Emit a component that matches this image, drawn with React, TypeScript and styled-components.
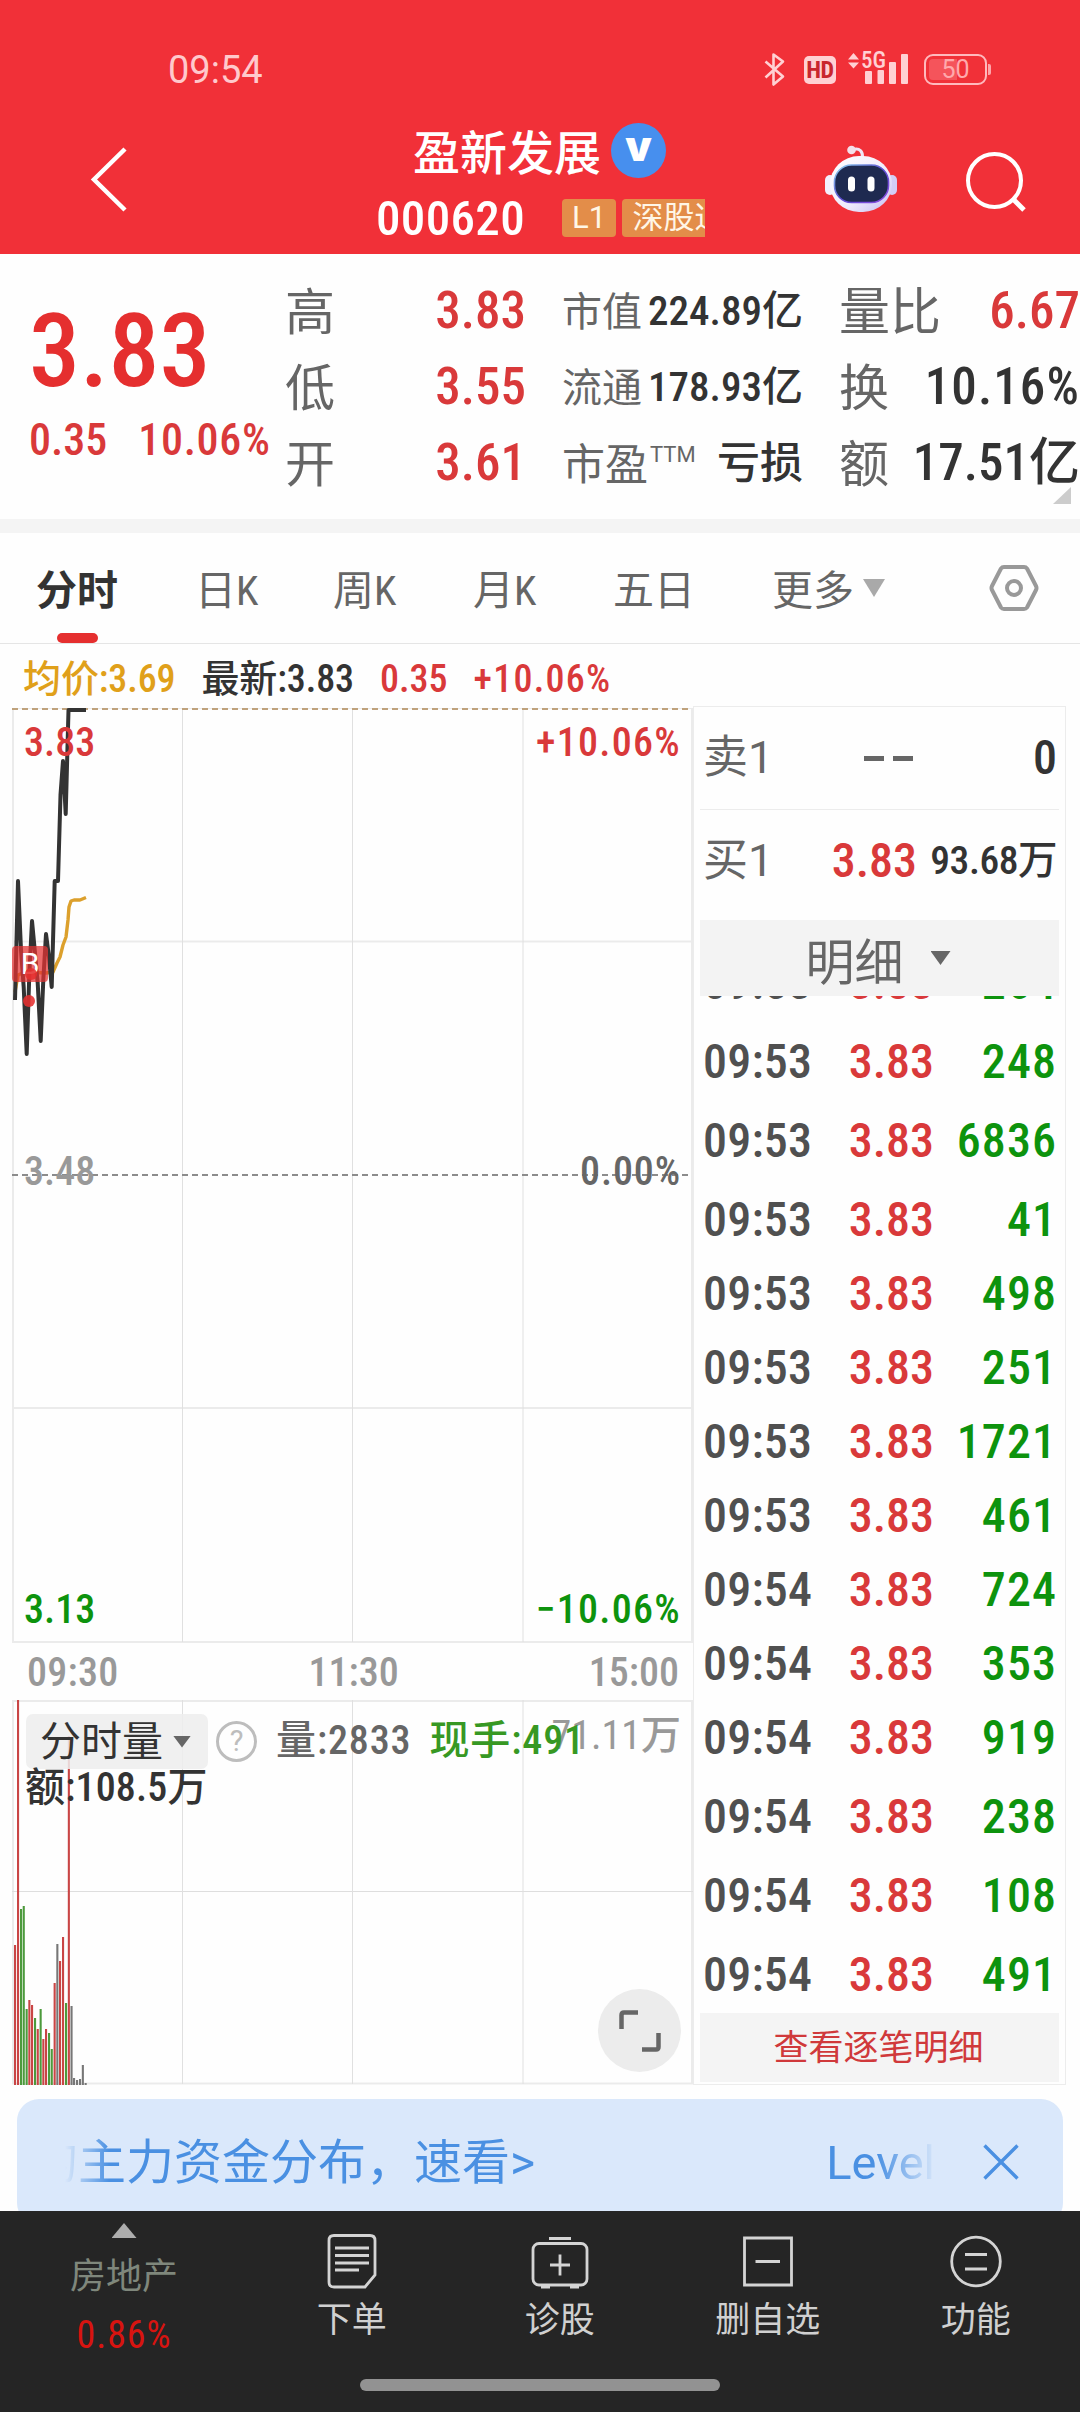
import React from "react";
import styled, { createGlobalStyle } from "styled-components";

const RED = "#d9393a";
const GREEN = "#0d930d";
const INK = "#333333";
const GRAY = "#666666";
const MUTED = "#999999";
const LABEL_FONT = `Roboto, "Noto Sans CJK SC", sans-serif`;
const NUM_FONT = `"Roboto Condensed", Roboto, "Noto Sans CJK SC", sans-serif`;

const GlobalStyle = createGlobalStyle`
  * { box-sizing: border-box; }
  body { margin: 0; background: #fff; font-family: ${LABEL_FONT}; }
  svg { display: block; flex: none; }
`;

const Screen = styled.div`
  width: 1080px;
  height: 2412px;
  display: flex;
  flex-direction: column;
  overflow: hidden;
  background: #fefefe;
`;

const Label = styled.span<{ $size: number; $color?: string; $weight?: number }>`
  font-size: ${p => p.$size}px;
  font-weight: ${p => p.$weight ?? 400};
  color: ${p => p.$color ?? GRAY};
  white-space: nowrap;
`;

const Num = styled.span<{ $size: number; $color?: string; $weight?: number; $track?: number }>`
  font-family: ${NUM_FONT};
  font-size: ${p => p.$size}px;
  font-weight: ${p => p.$weight ?? 500};
  letter-spacing: ${p => p.$track ?? 0}em;
  color: ${p => p.$color ?? INK};
  white-space: nowrap;
`;

const Caret = styled.i<{ $w: number; $h: number; $color: string; $up?: boolean }>`
  width: ${p => p.$w}px;
  height: ${p => p.$h}px;
  background: ${p => p.$color};
  clip-path: ${p => (p.$up ? "polygon(50% 0, 100% 100%, 0 100%)" : "polygon(0 0, 100% 0, 50% 100%)")};
`;

/* ---------- header ---------- */

const Header = styled.header`
  height: 254px;
  flex: none;
  background: #f13038;
  display: flex;
  flex-direction: column;
`;

const StatusBar = styled.div`
  height: 112px;
  padding: 52px 93px 0 168px;
  display: flex;
  justify-content: space-between;
  align-items: flex-start;
`;

const Clock = styled(Label)`
  line-height: 37px;
`;

const StatusIcons = styled.div`
  display: flex;
  align-items: flex-start;
  color: #ffd0d3;
`;

const HdChip = styled.div`
  width: 32px;
  height: 28px;
  margin: 4px 0 0 19px;
  border-radius: 5px;
  background: #ffd0d3;
  color: #c9262e;
  font: 700 24px/29px ${NUM_FONT};
  letter-spacing: -0.4px;
  text-align: center;
`;

const Signal = styled.div`
  position: relative;
  width: 64px;
  margin-left: 12px;
`;

const SignalText = styled.span`
  position: absolute;
  left: 13px;
  top: -3px;
  font: 500 23px/24px ${NUM_FONT};
`;

const Battery = styled.div`
  width: 63px;
  height: 31px;
  margin: 2px 0 0 12px;
  padding: 3px;
  border: 2px solid #ffb9bd;
  border-radius: 9px;
  display: flex;
  position: relative;
  &::after {
    content: "";
    position: absolute;
    right: -6px;
    top: 8px;
    width: 3px;
    height: 11px;
    border-radius: 0 2px 2px 0;
    background: #ffa5aa;
  }
`;

const Charge = styled.div`
  width: 28px;
  border-radius: 4px 0 0 4px;
  background: #f5545b;
`;

const ChargeText = styled.span`
  position: absolute;
  inset: 0;
  text-align: center;
  font: 400 25px/28px ${LABEL_FONT};
  color: #ffa9ad;
`;

const NavBar = styled.div`
  flex: 1;
  display: flex;
  align-items: flex-start;
`;

const BackSlot = styled.div`
  width: 376px;
  padding: 34px 0 0 88px;
`;

const TitleBlock = styled.div`
  width: 329px;
  margin-right: 120px;
  overflow: hidden;
`;

const TitleRow = styled.div`
  height: 74px;
  padding: 11px 0 0 37px;
  display: flex;
  line-height: 62px;
`;

const Verified = styled.span`
  width: 55px;
  height: 55px;
  margin-left: 10px;
  border-radius: 50%;
  background: #478fee;
  color: #fff;
  text-align: center;
  font: 900 42px/46px Inter, sans-serif;
`;

const CodeRow = styled.div`
  height: 64px;
  display: flex;
  align-items: center;
`;

const CodeNum = styled(Num)`
  width: 186px;
  flex: none;
`;

const Tag = styled.span<{ $w: number }>`
  width: ${p => p.$w}px;
  height: 38px;
  flex: none;
  margin-right: 6px;
  border-radius: 4px;
  background: #e38d49;
  color: #fff6e6;
  text-align: center;
  font: 400 31px/38px ${LABEL_FONT};
  white-space: nowrap;
`;

const IconSlot = styled.div<{ $top: number; $left?: number }>`
  padding: ${p => p.$top}px 0 0 ${p => p.$left ?? 0}px;
`;

/* ---------- quote ---------- */

const Quote = styled.section`
  height: 279px;
  flex: none;
  display: flex;
  border-bottom: 14px solid #f4f4f4;
  background: #fefefe;
  position: relative;
`;

const PriceBlock = styled.div`
  width: 285px;
  padding: 46px 0 0 29px;
  display: flex;
  flex-direction: column;
`;

const BigPrice = styled(Num)`
  line-height: 102px;
`;

const Change = styled.div`
  margin-top: 13px;
  display: flex;
  gap: 31px;
  line-height: 50px;
`;

const Stats = styled.div`
  padding-top: 19px;
  display: grid;
  grid-template-columns: repeat(3, 241px);
  grid-auto-rows: 76px;
  column-gap: 36px;
`;

const Stat = styled.div`
  display: flex;
  justify-content: space-between;
  align-items: flex-start;
  line-height: 76px;
`;

const StatLabel = styled(Label)`
  padding-top: 1.5px;
`;

const Sup = styled.sup`
  font-size: 22px;
  line-height: 1;
  position: relative;
  top: -2px;
  margin-left: 2px;
`;

const Corner = styled.i`
  position: absolute;
  right: 9px;
  top: 233px;
  width: 18px;
  height: 17px;
  background: #cccccc;
  clip-path: polygon(100% 0, 100% 100%, 0 100%);
`;

/* ---------- tabs ---------- */

const Tabs = styled.nav`
  height: 111px;
  flex: none;
  border-bottom: 1px solid #e5e5e5;
  display: flex;
  align-items: flex-start;
  padding-left: 36px;
`;

const Tab = styled.div<{ $w: number; $active?: boolean }>`
  width: ${p => p.$w}px;
  height: 110px;
  display: flex;
  align-items: flex-start;
  gap: 9px;
  padding-top: 28px;
  font-family: ${NUM_FONT};
  font-size: 41px;
  line-height: 60px;
  color: ${p => (p.$active ? INK : GRAY)};
  font-weight: ${p => (p.$active ? 700 : 400)};
  position: relative;
  white-space: nowrap;
  ${p => p.$active && `
    &::after {
      content: "";
      position: absolute;
      left: 21px;
      bottom: 0;
      width: 41px;
      height: 10px;
      border-radius: 5px;
      background: #e52f2f;
    }
  `}
  i { margin-top: 18px; }
`;

const InfoRow = styled.div`
  height: 62px;
  flex: none;
  padding: 5px 0 0 23px;
  display: flex;
  gap: 26px;
  line-height: 61px;
`;

/* ---------- market body ---------- */

const Market = styled.main`
  height: 1379px;
  flex: none;
  display: flex;
  padding-left: 12px;
`;

const Charts = styled.div`
  width: 681px;
  display: flex;
  flex-direction: column;
  padding-top: 2px;
`;

const ChartBox = styled.div<{ $h: number }>`
  height: ${p => p.$h}px;
  position: relative;
`;

const ChartText = styled(Num)<{ $y: number; $side: "left" | "right" }>`
  position: absolute;
  top: ${p => p.$y - 24}px;
  ${p => p.$side}: 12px;
  line-height: 50px;
`;

const Flag = styled.span`
  position: absolute;
  left: 0;
  top: 238px;
  width: 36px;
  height: 36px;
  border-radius: 4px;
  background: rgba(229, 50, 50, 0.72);
  color: #fff;
  text-align: center;
  font: 400 30px/35px ${LABEL_FONT};
`;

const Dot = styled.i<{ $x: number; $y: number }>`
  position: absolute;
  left: ${p => p.$x - 6}px;
  top: ${p => p.$y - 6}px;
  width: 12px;
  height: 12px;
  border-radius: 50%;
  background: rgba(229, 47, 47, 0.88);
`;

const TimeAxis = styled.div`
  height: 57px;
  padding: 0 14px 0 15px;
  display: flex;
  justify-content: space-between;
  line-height: 59px;
`;

const VolumeHead = styled.div`
  position: absolute;
  left: 14px;
  top: 14px;
  height: 55px;
  display: flex;
  align-items: center;
  line-height: 50px;
`;

const Pill = styled.div`
  width: 182px;
  height: 55px;
  padding-left: 14px;
  border-radius: 7px;
  background: rgba(238, 238, 238, 0.86);
  display: flex;
  align-items: center;
  gap: 10px;
  line-height: 54px;
`;

const Help = styled.span`
  width: 41px;
  height: 41px;
  margin: 0 19px 0 8px;
  border: 3px solid #bdbdbd;
  border-radius: 50%;
  color: #bdbdbd;
  text-align: center;
  font: 400 29px/35px ${LABEL_FONT};
`;

const Readout = styled.div`
  display: flex;
  gap: 18px;
  height: 55px;
  line-height: 54px;
`;

const Amount = styled(Num)`
  position: absolute;
  left: 13px;
  top: 63px;
  line-height: 50px;
`;

const Expand = styled.div`
  position: absolute;
  left: 586px;
  top: 289px;
  width: 83px;
  height: 83px;
  border-radius: 50%;
  background: #ececec;
  display: flex;
  align-items: center;
  justify-content: center;
`;

const Book = styled.aside`
  width: 373px;
  height: 1379px;
  padding: 0 6px 0 6px;
  border: 1px solid #ececec;
  display: flex;
  flex-direction: column;
`;

const Order = styled.div<{ $h: number; $line?: boolean }>`
  height: ${p => p.$h}px;
  flex: none;
  padding: 0 2px 0 3px;
  display: grid;
  grid-template-columns: 110px 104px 1fr;
  align-items: center;
  line-height: 60px;
  border-bottom: ${p => (p.$line ? "1px solid #ececec" : "0")};
  & > :nth-child(n + 2) { text-align: right; }
`;

const Dashes = styled.span`
  display: flex;
  justify-content: flex-end;
  gap: 9px;
  padding-right: 4px;
  i { width: 20px; height: 5px; background: ${GRAY}; }
`;

const DetailHead = styled.div`
  height: 76px;
  flex: none;
  margin-top: 8px;
  padding-right: 3px;
  background: #f3f3f3;
  display: flex;
  align-items: center;
  justify-content: center;
  gap: 27px;
`;

const Ticks = styled.div`
  flex: 1;
  min-height: 0;
  overflow: hidden;
  & > :first-child { margin-top: -39px; }
`;

const Tick = styled.div<{ $h: number }>`
  height: ${p => p.$h}px;
  padding: 0 2px 0 3px;
  display: grid;
  grid-template-columns: 128px 103px 1fr;
  line-height: 52px;
  & > :nth-child(n + 2) { text-align: right; }
`;

const MoreButton = styled.button`
  height: 69px;
  flex: none;
  margin-bottom: 2px;
  padding: 3px 2px 0 0;
  border: 0;
  background: #f4f4f4;
  color: #d0393b;
  font: 400 35px/66px ${LABEL_FONT};
`;

/* ---------- banner ---------- */

const Banner = styled.div`
  height: 126px;
  flex: none;
  margin: 14px 17px -14px;
  padding: 0 44px 0 48px;
  border-radius: 22px;
  background: #dae8fb;
  color: #4a90e2;
  display: flex;
  align-items: center;
  justify-content: space-between;
`;

const Marquee = styled.div`
  width: 870px;
  padding-top: 2px;
  overflow: hidden;
  display: flex;
  justify-content: space-between;
  font-size: 48px;
  line-height: 124px;
  white-space: nowrap;
  mask-image: linear-gradient(90deg, transparent 0, #000 44px, #000 812px, transparent 872px);
`;

const Lead = styled.span`
  margin-left: -35px;
`;

const Tail = styled.span`
  font-size: 47px;
`;

/* ---------- bottom bar ---------- */

const BottomBar = styled.footer`
  height: 201px;
  flex: none;
  position: relative;
  background: #252525;
  display: flex;
  flex-direction: column;
`;

const BottomItems = styled.div`
  height: 168px;
  padding-left: 20px;
  display: grid;
  grid-template-columns: 228px 208px 208px 208px 208px;
`;

const Sector = styled.div`
  padding: 12px 20px 0 0;
  display: flex;
  flex-direction: column;
  align-items: center;
`;

const SectorName = styled(Label)`
  margin-top: 9px;
  line-height: 60px;
`;

const SectorChange = styled(Num)`
  line-height: 57px;
`;

const Action = styled.div`
  margin-left: -0.5px;
  padding-top: 21px;
  display: flex;
  flex-direction: column;
  align-items: center;
  line-height: 62px;
`;

const HomeBar = styled.i`
  width: 360px;
  height: 12px;
  margin-left: 360px;
  border-radius: 6px;
  background: #929292;
`;

/* ---------- data ---------- */

const stats: { label: string; sup?: string; value: string; ls: number; vs: number; color?: string; track?: number }[] = [
  { label: "高", value: "3.83", ls: 50, vs: 51, color: RED },
  { label: "市值", value: "224.89亿", ls: 40, vs: 41 },
  { label: "量比", value: "6.67", ls: 51, vs: 51, color: RED },
  { label: "低", value: "3.55", ls: 50, vs: 51, color: RED },
  { label: "流通", value: "178.93亿", ls: 40, vs: 41 },
  { label: "换", value: "10.16%", ls: 50, vs: 51, track: 0.022 },
  { label: "开", value: "3.61", ls: 50, vs: 51, color: RED },
  { label: "市盈", sup: "TTM", value: "亏损", ls: 43, vs: 43 },
  { label: "额", value: "17.51亿", ls: 50, vs: 51 },
];

const ticks: [string, string, number][] = [
  ["09:53", "264", 79], ["09:53", "248", 79], ["09:53", "6836", 79], ["09:53", "41", 74],
  ["09:53", "498", 74], ["09:53", "251", 74], ["09:53", "1721", 74], ["09:53", "461", 74],
  ["09:54", "724", 74], ["09:54", "353", 74], ["09:54", "919", 79], ["09:54", "238", 79],
  ["09:54", "108", 79], ["09:54", "491", 79],
];

type Bar = [number, number, "r" | "g" | "k"];
const bars: Bar[] = [
  [15, 1944, "r"], [18, 1699, "r"], [21, 1908, "g"], [23.7, 1905, "g"], [26.6, 2008, "g"],
  [29.3, 1999, "r"], [32, 2004, "r"], [35, 2017, "g"], [37.7, 2028, "r"], [40.6, 2008, "g"],
  [43.3, 2038, "r"], [46, 2028, "r"], [49, 2032, "g"], [51.7, 2048, "g"], [54.6, 1982, "r"],
  [57.3, 1943, "k"], [60, 1960, "r"], [63, 1936, "r"], [66, 2002, "g"], [68.8, 1735, "r"],
  [71.5, 2005, "k"], [74, 2077, "k"], [77, 2079, "k"], [80, 2078, "k"], [82.8, 2064, "k"], [85.6, 2082, "k"],
];
const barColor = { r: "#c94545", g: "#4c9a3c", k: "#777777" };

const pricePath =
  "M15 1000L18 881L21 950L23.7 987L26.7 1054L29.3 975L32 921L35 953L37.7 983L40.7 1041L43.3 980L46 934L49 957L51.7 987L54.7 881H58L60.5 795L63 761L65.7 814L68.5 710H86";
const avgPath = "M15 992L18 975L25 972L46 973L53 972L57 963L60 957L63 945L66 937L68 920L69 907L71 901L74 900H80L86 897.5";

const gridX = [170.5, 340.5, 511];

/* ---------- drawings ---------- */

const Bluetooth = () => (
  <svg width="21" height="35" viewBox="0 0 21 35" fill="none" stroke="currentColor" strokeWidth="2.6" strokeLinejoin="round">
    <path d="M1.5 9.5L19 24.5L9.5 32.5V2.5L19 9.5L1.5 25.5" />
  </svg>
);

const SignalBars = () => (
  <svg width="62" height="34" viewBox="0 0 62 34" fill="currentColor">
    <path d="M0 7.5L5.5 1L11 7.5zM0 10.5L5.5 16.5L11 10.5z" />
    <rect x="17" y="19" width="7" height="13" rx="1" />
    <rect x="29.5" y="18" width="6.5" height="14" rx="1" />
    <rect x="41" y="10" width="7" height="22" rx="1" />
    <rect x="53" y="2" width="7" height="30" rx="1" />
  </svg>
);

const Robot = () => (
  <svg width="72" height="68" viewBox="0 0 72 68">
    <defs>
      <linearGradient id="shell" x1="0" y1="0" x2="1" y2="1">
        <stop offset="0" stopColor="#ffffff" />
        <stop offset="0.6" stopColor="#efeafb" />
        <stop offset="1" stopColor="#c4bcf2" />
      </linearGradient>
      <linearGradient id="rim" x1="0" y1="0" x2="1" y2="1">
        <stop offset="0" stopColor="#8fd8f0" />
        <stop offset="0.5" stopColor="#5a4bd0" />
        <stop offset="1" stopColor="#8c4be0" />
      </linearGradient>
    </defs>
    <path d="M27 5C35 2 38 7 37.5 13" fill="none" stroke="#f0e6f6" strokeWidth="3" />
    <circle cx="26.5" cy="5" r="4.3" fill="#f4dfe9" />
    <rect x="0" y="30" width="10" height="20" rx="5" fill="#f3effc" />
    <rect x="62" y="30" width="10" height="20" rx="5" fill="#d3cdf6" />
    <rect x="5" y="11" width="62" height="56" rx="29" fill="url(#shell)" />
    <rect x="9.5" y="20" width="54" height="37.5" rx="17" fill="#1e2a50" stroke="url(#rim)" strokeWidth="1.6" />
    <rect x="23" y="31.5" width="7" height="15" rx="3.5" fill="#fff" />
    <rect x="42.5" y="31.5" width="7" height="15" rx="3.5" fill="#fff" />
  </svg>
);

const PriceChart = () => (
  <svg width="681" height="936" viewBox="0 0 681 936" fill="none">
    <path d="M0 0H681M0 233.5H681M0 700H681M0 934H681M1 0V934M680 0V934" stroke="#ebebeb" strokeWidth="2" />
    {gridX.map(x => <path key={x} d={`M${x} 0V934`} stroke="#e0e0e0" />)}
    <path d="M0 1H680" stroke="#bfa27c" strokeWidth="2" strokeDasharray="6 4" />
    <path d="M0 467H680" stroke="#8c8c8c" strokeWidth="2" strokeDasharray="6 4" />
    <g transform="translate(-12 -708)" strokeLinejoin="round">
      <path d={avgPath} stroke="#dca02c" strokeWidth="3.4" />
      <path d={pricePath} stroke="#333" strokeWidth="4" />
    </g>
  </svg>
);

const VolumeChart = () => (
  <svg width="681" height="385" viewBox="0 0 681 385" fill="none">
    <path d="M0 1H681M0 383.5H681M1 0V384M680 0V384" stroke="#ebebeb" strokeWidth="2" />
    <path d="M0 191.5H681" stroke="#dedede" />
    {gridX.map(x => <path key={x} d={`M${x} 0V384`} stroke="#e0e0e0" />)}
    {bars.map(([x, y, c]) => (
      <rect key={x} x={x - 13} y={y - 1699} width="2.1" height={2084 - y} fill={barColor[c]} />
    ))}
  </svg>
);

const actions = [
  {
    name: "下单",
    icon: (
      <svg width="58" height="58" viewBox="0 0 58 58" fill="none" stroke="#d4d4d4" strokeWidth="2.8">
        <path d="M11 3.5H47Q52 3.5 52 8.5V43L42 55H11Q6 55 6 50V8.5Q6 3.5 11 3.5z" />
        <path d="M12 16H46M12 23.5H46M12 31H46M12 38H36" />
      </svg>
    ),
  },
  {
    name: "诊股",
    icon: (
      <svg width="58" height="58" viewBox="0 0 58 58" fill="none" stroke="#d4d4d4" strokeWidth="2.8">
        <rect x="2" y="11.5" width="54" height="41.5" rx="6" />
        <path d="M18 6.5H40M29 22.5V43.5M19 33H39M10 55H19M39 55H48" />
      </svg>
    ),
  },
  {
    name: "删自选",
    icon: (
      <svg width="58" height="58" viewBox="0 0 58 58" fill="none" stroke="#d4d4d4" strokeWidth="2.8">
        <path d="M5.5 6H52.5V53H5.5zM16.5 29.5H41" />
      </svg>
    ),
  },
  {
    name: "功能",
    icon: (
      <svg width="58" height="58" viewBox="0 0 58 58" fill="none" stroke="#d4d4d4" strokeWidth="2.8">
        <circle cx="29" cy="29.5" r="24.3" />
        <path d="M18 22.5H40M18 37H40" />
      </svg>
    ),
  },
];

export default function App() {
  return (
    <Screen>
      <GlobalStyle />
      <Header>
        <StatusBar>
          <Clock $size={38} $color="#ffc9cc">09:54</Clock>
          <StatusIcons>
            <Bluetooth />
            <HdChip>HD</HdChip>
            <Signal>
              <SignalBars />
              <SignalText>5G</SignalText>
            </Signal>
            <Battery>
              <Charge />
              <ChargeText>50</ChargeText>
            </Battery>
          </StatusIcons>
        </StatusBar>
        <NavBar>
          <BackSlot>
            <svg width="40" height="68" viewBox="0 0 40 68" fill="none" stroke="#fff" strokeWidth="4.5">
              <path d="M37 3L6 33.5L37 64" />
            </svg>
          </BackSlot>
          <TitleBlock>
            <TitleRow>
              <Label $size={47} $color="#fff" $weight={500}>盈新发展</Label>
              <Verified>v</Verified>
            </TitleRow>
            <CodeRow>
              <CodeNum $size={49} $color="#fff" $track={0.007}>000620</CodeNum>
              <Tag $w={54}>L1</Tag>
              <Tag $w={114}>深股通</Tag>
            </CodeRow>
          </TitleBlock>
          <IconSlot $top={33}><Robot /></IconSlot>
          <IconSlot $top={39} $left={68}>
            <svg width="62" height="62" viewBox="0 0 62 62" fill="none" stroke="#fff" strokeWidth="4">
              <circle cx="29.5" cy="29.5" r="26.5" />
              <path d="M48.5 48.5L59 59" strokeWidth="5" />
            </svg>
          </IconSlot>
        </NavBar>
      </Header>

      <Quote>
        <PriceBlock>
          <BigPrice $size={102} $color="#e52f2f">3.83</BigPrice>
          <Change>
            <Num $size={44} $color={RED}>0.35</Num>
            <Num $size={44} $color={RED} $track={0.016}>10.06%</Num>
          </Change>
        </PriceBlock>
        <Stats>
          {stats.map(s => (
            <Stat key={s.label}>
              <StatLabel $size={s.ls}>{s.label}{s.sup && <Sup>{s.sup}</Sup>}</StatLabel>
              <Num $size={s.vs} $color={s.color} $track={s.track}>{s.value}</Num>
            </Stat>
          ))}
        </Stats>
        <Corner />
      </Quote>

      <Tabs>
        <Tab $w={159} $active>分时</Tab>
        <Tab $w={138}>日K</Tab>
        <Tab $w={140}>周K</Tab>
        <Tab $w={140}>月K</Tab>
        <Tab $w={159}>五日</Tab>
        <Tab $w={217}>更多<Caret $w={22} $h={18} $color="#a9a9a9" /></Tab>
        <IconSlot $top={31}>
          <svg width="50" height="48" viewBox="0 0 50 48" fill="none" stroke="#999" strokeWidth="4" strokeLinejoin="round">
            <path d="M15 3H35Q37 3 38 4.5L47 22Q48 24 47 26L38 43.5Q37 45 35 45H15Q13 45 12 43.5L3 26Q2 24 3 22L12 4.5Q13 3 15 3z" />
            <circle cx="25" cy="24" r="7" />
          </svg>
        </IconSlot>
      </Tabs>

      <InfoRow>
        <Num $size={38} $color="#e0a01a" $track={-0.003}>均价:3.69</Num>
        <Num $size={38} $track={-0.003}>最新:3.83</Num>
        <Num $size={38} $color={RED}>0.35</Num>
        <Num $size={38} $color={RED} $track={0.033}>+10.06%</Num>
      </InfoRow>

      <Market>
        <Charts>
          <ChartBox $h={935}>
            <PriceChart />
            <ChartText $size={40} $color={RED} $y={34} $side="left">3.83</ChartText>
            <ChartText $size={40} $color={RED} $y={34} $side="right" $track={0.032}>+10.06%</ChartText>
            <ChartText $size={40} $color={MUTED} $y={463} $side="left">3.48</ChartText>
            <ChartText $size={40} $color={GRAY} $y={463} $side="right" $track={0.022}>0.00%</ChartText>
            <ChartText $size={40} $color={GREEN} $y={901} $side="left">3.13</ChartText>
            <ChartText $size={40} $color={GREEN} $y={901} $side="right" $track={0.032}>−10.06%</ChartText>
            <Flag>B</Flag>
            <Dot $x={19} $y={266} />
            <Dot $x={17} $y={293} />
          </ChartBox>
          <TimeAxis>
            <Num $size={40} $color={MUTED} $track={0.006}>09:30</Num>
            <Num $size={40} $color={MUTED}>11:30</Num>
            <Num $size={40} $color={MUTED}>15:00</Num>
          </TimeAxis>
          <ChartBox $h={385}>
            <VolumeChart />
            <ChartText $size={40} $color={MUTED} $weight={450} $y={35} $side="right">71.11万</ChartText>
            <VolumeHead>
              <Pill>
                <Label $size={41} $color={INK}>分时量</Label>
                <Caret $w={18} $h={12} $color={GRAY} />
              </Pill>
              <Help>?</Help>
              <Readout>
                <Num $size={40} $color={GRAY} $track={0.022}>量:2833</Num>
                <Num $size={40} $color="#379823" $track={0.022}>现手:491</Num>
              </Readout>
            </VolumeHead>
            <Amount $size={40} $track={0.004}>额:108.5万</Amount>
            <Expand>
              <svg width="44" height="44" viewBox="0 0 44 44" fill="none" stroke={GRAY} strokeWidth="4.5">
                <path d="M3.5 20V6Q3.5 3.5 6 3.5H20M24 40.5H38Q40.5 40.5 40.5 38V24" />
              </svg>
            </Expand>
          </ChartBox>
        </Charts>

        <Book>
          <Order $h={103} $line>
            <Label $size={45}>卖1</Label>
            <Dashes><i /><i /></Dashes>
            <Num $size={48}>0</Num>
          </Order>
          <Order $h={102}>
            <Label $size={45}>买1</Label>
            <Num $size={48} $color={RED}>3.83</Num>
            <Num $size={39.5} $track={-0.012}>93.68万</Num>
          </Order>
          <DetailHead>
            <Label $size={49}>明细</Label>
            <Caret $w={20} $h={14} $color={GRAY} />
          </DetailHead>
          <Ticks>
            {ticks.map(([time, volume, h], i) => (
              <Tick key={i} $h={h}>
                <Num $size={48} $color="#505050" $track={0.004}>{time}</Num>
                <Num $size={48} $color={RED}>3.83</Num>
                <Num $size={48} $color={GREEN} $track={0.022}>{volume}</Num>
              </Tick>
            ))}
          </Ticks>
          <MoreButton>查看逐笔明细</MoreButton>
        </Book>
      </Market>

      <Banner>
        <Marquee>
          <Lead>的主力资金分布，速看&gt;</Lead>
          <Tail>Level</Tail>
        </Marquee>
        <svg width="36" height="36" viewBox="0 0 36 36" fill="none" stroke="#4a90e2" strokeWidth="3.4">
          <path d="M1.5 1.5L34.5 34.5M34.5 1.5L1.5 34.5" />
        </svg>
      </Banner>

      <BottomBar>
        <BottomItems>
          <Sector>
            <Caret $w={25} $h={15} $color="#adadad" $up />
            <SectorName $size={36} $color="#7f877c">房地产</SectorName>
            <SectorChange $size={38} $color="#d81410" $weight={400} $track={0.025}>0.86%</SectorChange>
          </Sector>
          {actions.map(a => (
            <Action key={a.name}>
              {a.icon}
              <Label $size={35} $color="#d0d0d0">{a.name}</Label>
            </Action>
          ))}
        </BottomItems>
        <HomeBar />
      </BottomBar>
    </Screen>
  );
}
